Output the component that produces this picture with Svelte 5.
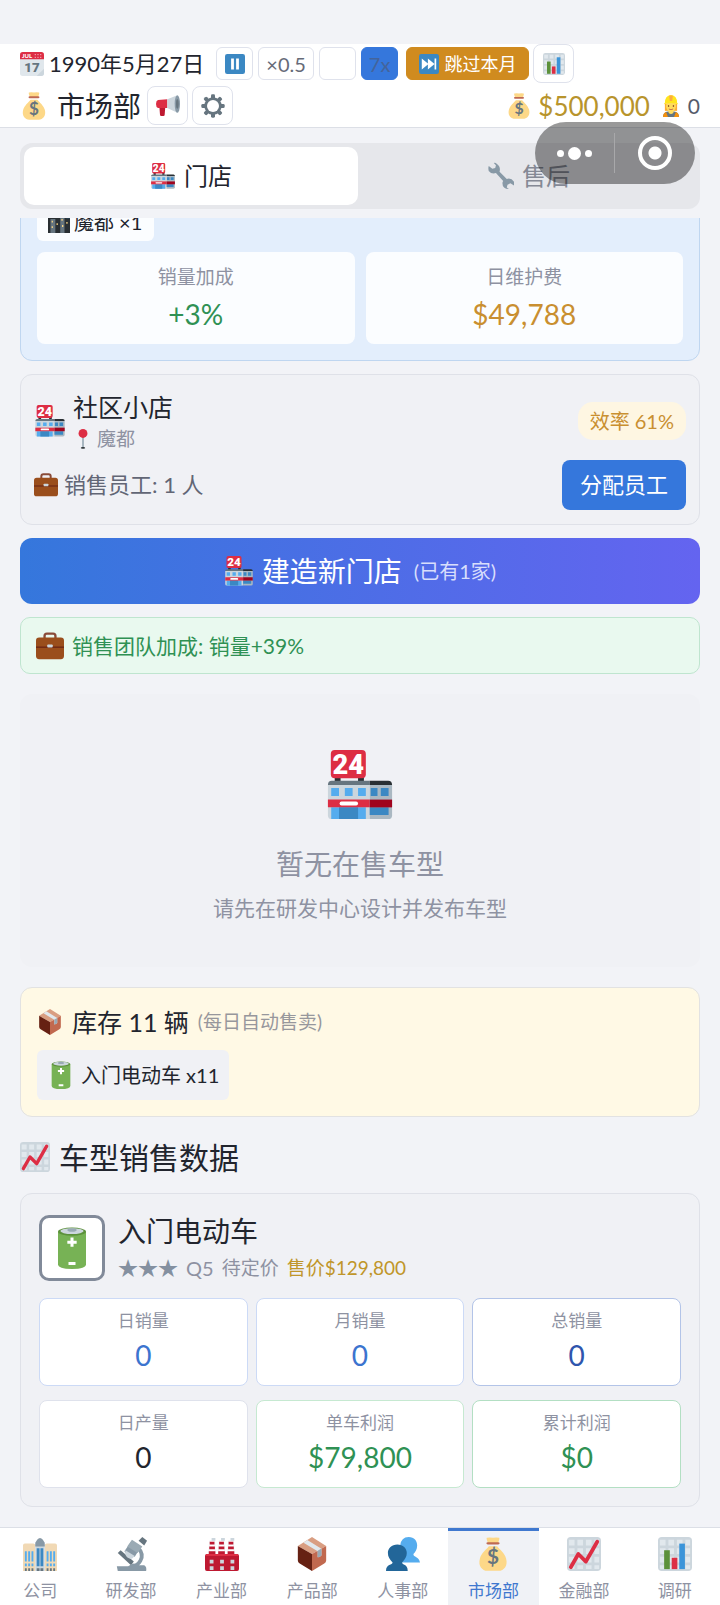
<script>
	let tab = $state("store");
	let page = $state("market");
	let speed = $state("7x");

	const bonuses = [
		{ label: "销量加成", value: "+3%", tone: "green" },
		{ label: "日维护费", value: "$49,788", tone: "amber" }
	];

	const stats = [
		{ label: "日销量", value: "0", tone: "blue" },
		{ label: "月销量", value: "0", tone: "blue" },
		{ label: "总销量", value: "0", tone: "navy" },
		{ label: "日产量", value: "0", tone: "dark" },
		{ label: "单车利润", value: "$79,800", tone: "green" },
		{ label: "累计利润", value: "$0", tone: "deepgreen" }
	];

	const pages = [
		{ id: "company", icon: "office", label: "公司" },
		{ id: "research", icon: "microscope", label: "研发部" },
		{ id: "industry", icon: "factory", label: "产业部" },
		{ id: "product", icon: "box", label: "产品部" },
		{ id: "people", icon: "people", label: "人事部" },
		{ id: "market", icon: "bag", label: "市场部" },
		{ id: "finance", icon: "trend", label: "金融部" },
		{ id: "survey", icon: "bars", label: "调研" }
	];
</script>

{#snippet icon(name, size)}
	<svg class="icon {size}" viewBox="0 0 36 36" aria-hidden="true">
		{#if name === "shop"}
			<path fill="#292f33" d="M5 13h3v4H5zM17 13h3v4h-3z" />
			<rect x="3" width="18" height="14.5" rx="2" fill="#dd2e44" />
			<text class="sign" x="12" y="12.2" font-size="14" font-weight="900" text-anchor="middle" fill="#fff">24</text>
			<path fill="#ccd6dd" d="M1.5 18H23v17.5H3.500a2 2 0 0 1-2-2z" />
			<path fill="#aab8c2" d="M23 18h11.500v15.500a2 2 0 0 1-2 2H23z" />
			<path fill="#66757f" d="M1.500 18q0-2.200 2-2.200H23V18z" />
			<path fill="#292f33" d="M23 15.800h9.500q2 0 2 2.200H23z" />
			<path fill="#55acee" d="M3.200 19.600h4v4h-4zM10.200 19.600h4v4h-4zM17 19.600h4v4h-4zM3.200 29.400H21v6.100H3.200z" />
			<path fill="#3b88c3" d="M23.500 19.600H27v4h-3.500zM28.700 19.600h4v4h-4zM7.200 29.400H17v6.100H7.200zM23 29.400h9.700v4H23z" />
			<path fill="#dd2e44" d="M1.500 25.500H23v4H1.500z" />
			<path fill="#a0041e" d="M23 25.500h11.500v4H23z" />
			<rect x="7.500" y="26.500" width="9.500" height="2" rx="1" fill="#fff" />
		{:else if name === "bag"}
			<path fill="#fdd888" d="M31.900 22.900c-1.500-5.600-7-9.800-9.500-13H13.600c-2.500 3.200-8 7.400-9.500 13C2 30.600 6.500 35.500 12 35.800h12c5.500-.3 10-5.200 7.900-12.900z" />
			<path fill="#fdd888" d="M13 7Q10.500 1.500 11.500.8q3-.8 6.500 0 3.500-.8 6.500 0 1 .7-1.500 6.200z" />
			<path fill="#bf6952" d="M12.500 5.500h11q1.500 0 1.500 1.200t-1.500 1.200h-11Q11 7.900 11 6.700t1.500-1.200z" />
			<text x="18" y="29" font-size="22" font-weight="700" text-anchor="middle" fill="#67757f">$</text>
		{:else if name === "calendar"}
			<path fill="#e0e7ec" d="M0 8h36v24a4 4 0 0 1-4 4H4a4 4 0 0 1-4-4z" />
			<path fill="#ccd6dd" d="M25 36h7a4 4 0 0 0 4-4v-7z" />
			<path fill="#dd2e44" d="M4 0h28a4 4 0 0 1 4 4v7H0V4a4 4 0 0 1 4-4z" />
			<text x="10.500" y="9.500" font-size="9" font-weight="900" text-anchor="middle" fill="#fff">JUL</text>
			<path stroke="#f4abba" stroke-width="1.500" stroke-dasharray="2 2" d="M22 4h11M22 8h11" />
			<text class="sign" x="18" y="30" font-size="20" font-weight="900" text-anchor="middle" fill="#66757f">17</text>
		{:else if name === "pause" || name === "skip"}
			<rect width="36" height="36" rx="4" fill="#3b88c3" />
			{#if name === "pause"}
				<path fill="#fff" d="M11 8h5v20h-5zM20 8h5v20h-5z" />
			{:else}
				<path fill="#fff" d="M5 8l12 10L5 28zM16 8l12 10-12 10zM28 8h3v20h-3z" />
			{/if}
		{:else if name === "bars" || name === "trend"}
			<rect width="36" height="36" rx="4" fill="#ccd6dd" />
			<path fill="#e1e8ed" d="M2 3h6v6H2zM11 3h6v6h-6zM20 3h6v6h-6zM29 3h5v6h-5zM2 12h6v6H2zM11 12h6v6h-6zM20 12h6v6h-6zM29 12h5v6h-5zM2 21h6v6H2zM11 21h6v6h-6zM20 21h6v6h-6zM29 21h5v6h-5zM2 30h6v4H2zM11 30h6v4h-6zM20 30h6v4h-6zM29 30h5v4h-5z" />
			{#if name === "bars"}
				<path fill="#5c913b" d="M6.500 14h6v20h-6z" />
				<path fill="#dd2e44" d="M14.500 22h6v12h-6z" />
				<path fill="#3b94d9" d="M22.500 7h6v27h-6z" />
			{:else}
				<path fill="none" stroke="#dd2e44" stroke-width="4" stroke-linecap="round" stroke-linejoin="round" d="M4 32l8-14 8 8L32 5" />
			{/if}
		{:else if name === "megaphone"}
			<path fill="#be1931" d="M5 18h9l-1 13q0 2-2 2H8q-2 0-2-2z" />
			<path fill="#dd2e44" d="M3 9l14-1v13H3q-3-1-3-6t3-6z" />
			<path fill="#ccd6dd" d="M17 8l15-6v26l-15-7z" />
			<ellipse cx="32" cy="15" rx="4" ry="13" fill="#8899a6" />
			<ellipse cx="32" cy="15" rx="2" ry="7" fill="#66757f" />
		{:else if name === "gear"}
			<g fill="#66757f">
				{#each [0, 45, 90, 135] as turn}
					<rect x="15" y="0.500" width="6" height="35" rx="2" transform="rotate({turn} 18 18)" />
				{/each}
				<circle cx="18" cy="18" r="13" />
			</g>
			<circle cx="18" cy="18" r="9" fill="#fff" />
		{:else if name === "worker"}
			<path fill="#ffac33" d="M8 14h20v12H8z" />
			<path fill="#66757f" d="M5 36q0-8 8-9h10q8 1 8 9z" />
			<path fill="#f4900c" d="M5 36q0-6 5-8l3 8zM31 36q0-6-5-8l-3 8z" />
			<path fill="#ffdc5d" d="M14 24h8v5q-4 4-8 0z" />
			<ellipse cx="18" cy="18" rx="8" ry="10" fill="#ffdc5d" />
			<path fill="#ffe51e" d="M8 13Q8 1 18 0q10 1 10 13 2 1 1 2-11-4-22 0-1-1 1-2z" />
			<path fill="#fcab40" d="M15 1h6l-1 9h-4z" />
			<circle cx="14" cy="18" r="1.200" fill="#662113" />
			<circle cx="22" cy="18" r="1.200" fill="#662113" />
			<path fill="none" stroke="#c1694f" stroke-width="1.500" d="M14.500 23q3.500 2 7 0" />
		{:else if name === "wrench"}
			<path fill="#8899a6" d="M12 1q6 4 4 11l10 10q6-2 10 4v5l-5-3-4 2-1 4 3 2q-9 0-9-8 0-2 1-3L11 14q-6 2-10-3-1-4 0-7l5 4 4-1 1-4-3-3q2-1 4 1z" />
		{:else if name === "city"}
			<rect width="36" height="36" fill="#226699" />
			<path fill="#88c9f9" d="M0 0h36v7H0z" />
			<path fill="#292f33" d="M0 10h9V5h9v5h4V3h8v9h6v24H0z" />
			<path fill="#66757f" d="M4 13h8v23H4zM20 9h7v27h-7z" />
			<path fill="#ffd983" d="M6 16h2v3H6zM22 13h2v3h-2zM14 20h2v3h-2zM30 18h2v3h-2zM6 25h2v3H6zM23 23h2v3h-2z" />
		{:else if name === "pin"}
			<path fill="#99aab5" d="M16.500 14h3v19h-3z" />
			<ellipse cx="18" cy="34" rx="4" ry="1.500" fill="#292f33" />
			<circle cx="18" cy="8" r="8" fill="#dd2e44" />
		{:else if name === "briefcase"}
			<path fill="none" stroke="#8a4b38" stroke-width="3" d="M11 9V5q0-3 3-3h8q3 0 3 3v4" />
			<rect y="7" width="36" height="28" rx="4" fill="#9a4e1c" />
			<path stroke="#662113" stroke-width="1.500" d="M0 19.500h36" />
			<rect x="14.500" y="16" width="7" height="4" rx="1" fill="#ccd6dd" />
		{:else if name === "box"}
			<path fill="#d99e82" d="M18 0l15 9.500L18 18 3 9.500z" />
			<path fill="#662113" d="M3 9.500L18 18v18L5 28q-2-1-2-3z" />
			<path fill="#c1694f" d="M33 9.500L18 18v18l13-8q2-1 2-3z" />
			<path fill="#e1e8ed" d="M9 6l4-2.800 15 9.300v7q-2 2-4 2V15z" />
			<path fill="#99aab5" d="M24 14.500l4-2.200v7.200q-2 2-4 2z" />
		{:else if name === "battery"}
			<path fill="#77b255" d="M6 4v28q0 4 12 4t12-4V4z" />
			<ellipse cx="18" cy="4" rx="12" ry="3.500" fill="#5c913b" />
			<ellipse cx="18" cy="3.500" rx="10" ry="2.500" fill="#ccd6dd" />
			<ellipse cx="18" cy="2.500" rx="4" ry="1.500" fill="#99aab5" />
			<path fill="#fff" d="M16.700 9h2.600v2.700H22v2.600h-2.700V17h-2.600v-2.700H14v-2.600h2.700zM15 30h6v2.500h-6z" />
		{:else if name === "office"}
			<path fill="#f1d9b5" d="M0 9q0-2 2-2h9l2 1v28H0zM23 8l2-1h9q2 0 2 2v27H23z" />
			<path fill="#ccd6dd" d="M13 8h10v28H13z" />
			<path fill="#8899a6" d="M13 10V6l2-3q3-4 6 0l2 3v4z" />
			<path fill="#55acee" d="M2 15h2v11H2zM5.500 15h2v11h-2zM9 15h2v11H9zM25 15h2v11h-2zM28.500 15h2v11h-2zM32 15h2v11h-2z" />
			<path fill="#3b88c3" d="M14.500 12h3v19h-3zM18.500 12h3v19h-3z" />
			<path fill="#55acee" d="M2 28h2v3H2zM5.500 28h2v3h-2zM9 28h2v3H9zM25 28h2v3h-2zM28.500 28h2v3h-2zM32 28h2v3h-2z" />
			<path fill="#66757f" d="M2 33h2v3H2zM5.500 33h2v3h-2zM9 33h2v3H9zM14.500 33h3v3h-3zM18.500 33h3v3h-3zM25 33h2v3h-2zM28.500 33h2v3h-2zM32 33h2v3h-2z" />
		{:else if name === "microscope"}
			<path fill="#66757f" d="M4 17l3-3 14 12-3 4z" />
			<path fill="none" stroke="#8899a6" stroke-width="4" d="M25 11q7 7 3 14-3 6-10 6" />
			<path fill="#8899a6" d="M3 31h12l5-3 7 2h5q3 2 2 6H4zM18 5l10 6-6 10-7-1-4-5z" />
			<path fill="#ccd6dd" d="M12 14l10 6-3 3q-6 0-7-5z" />
			<path fill="#9aaab4" d="M19 3l11 7-5 7-11-7z" />
			<path fill="#66757f" d="M26 4l4-4 5 4-3 5z" />
		{:else if name === "factory"}
			<path fill="#fff" stroke="#dfe4ea" stroke-width=".5" d="M5 4h5l1 15H4zM15 4h5l1 15h-7zM25 4h5l1 15h-7z" />
			<path fill="#be1931" d="M5 5h5v3H5zM4.500 10h6v3h-6zM4 15h7v3H4zM15 5h5v3h-5zM14.500 10h6v3h-6zM14 15h7v3h-7zM25 5h5v3h-5zM24.500 10h6v3h-6zM24 15h7v3h-7z" />
			<path fill="#ccd6dd" d="M7 1h4v3H7zM17 1h4v3h-4zM27 1h4v3h-4z" />
			<rect y="18" width="36" height="18" rx="2" fill="#be1931" />
			<path fill="#dd2e44" d="M1 18h34v2H1z" />
			<path fill="#ccd6dd" d="M5 24h4v4H5zM16 24h4v4h-4zM27 24h4v4h-4zM5 31h4v4H5zM16 31h4v4h-4zM27 31h4v4h-4z" />
		{:else if name === "people"}
			<path fill="#55acee" d="M24 0c6 0 9 4 9 9 0 4-2 7-4 9 0 4 6 2 7 9H15V9q1-9 9-9z" />
			<path fill="#226699" d="M12 8c6 0 10 4 10 9 0 4-2 7-5 10 0 3 6 1 6 9H0c0-8 7-6 7-9-3-3-5-6-5-10 0-5 4-9 10-9z" />
		{/if}
	</svg>
{/snippet}

<div class="app">
	<header>
		<div class="row">
			<span class="date">{@render icon("calendar", "s24")}1990年5月27日</span>
			<div class="speeds">
				<button class="speed" aria-label="pause">{@render icon("pause", "s20")}</button>
				<button class="speed" onclick={() => (speed = "0.5")}>×0.5</button>
				<button class="speed" aria-label="normal speed"></button>
				<button class="speed" class:on={speed === "7x"} onclick={() => (speed = "7x")}>7x</button>
			</div>
			<button class="skip">{@render icon("skip", "s20")}跳过本月</button>
			<button class="tool" aria-label="report">{@render icon("bars", "s22")}</button>
		</div>
		<div class="row">
			<h1>{@render icon("bag", "s28")}市场部</h1>
			<button class="tool" aria-label="ads">{@render icon("megaphone", "s24")}</button>
			<button class="tool" aria-label="settings">{@render icon("gear", "s24")}</button>
			<div class="wallet">
				{@render icon("bag", "s26")}<span class="cash">$500,000</span>
				{@render icon("worker", "s22")}<span>0</span>
			</div>
		</div>
		<div class="capsule">
			<button class="dots" aria-label="more"><i></i><i class="big"></i><i></i></button>
			<button class="close" aria-label="close"><i></i></button>
		</div>
	</header>

	<div class="tabs">
		<button class:active={tab === "store"} onclick={() => (tab = "store")}>{@render icon("shop", "s26")}门店</button>
		<button class:active={tab === "service"} onclick={() => (tab = "service")}>{@render icon("wrench", "s26")}售后</button>
	</div>

	<main>
		<section class="summary">
			<span class="city">{@render icon("city", "s22")}魔都 ×1</span>
			<div class="bonuses">
				{#each bonuses as bonus}
					<div class="bonus">
						<span>{bonus.label}</span>
						<strong class={bonus.tone}>{bonus.value}</strong>
					</div>
				{/each}
			</div>
		</section>

		<section class="store">
			<div class="line">
				{@render icon("shop", "s32")}
				<div class="name">
					<h2>社区小店</h2>
					<p>{@render icon("pin", "s20")}魔都</p>
				</div>
				<span class="badge">效率 61%</span>
			</div>
			<div class="line staff">
				<span>{@render icon("briefcase", "s24")}销售员工: 1 人</span>
				<button class="assign">分配员工</button>
			</div>
		</section>

		<button class="build">{@render icon("shop", "s30")}建造新门店<small>(已有1家)</small></button>

		<section class="team">{@render icon("briefcase", "s28")}销售团队加成: 销量+39%</section>

		<section class="empty">
			{@render icon("shop", "s70")}
			<h2>暂无在售车型</h2>
			<p>请先在研发中心设计并发布车型</p>
		</section>

		<section class="stock">
			<h2>{@render icon("box", "s26")}库存 11 辆<small>(每日自动售卖)</small></h2>
			<span class="item">{@render icon("battery", "s28")}入门电动车 x11</span>
		</section>

		<h2 class="heading">{@render icon("trend", "s30")}车型销售数据</h2>

		<section class="model">
			<div class="top">
				<div class="thumb">{@render icon("battery", "s42")}</div>
				<div>
					<h3>入门电动车</h3>
					<p class="meta">
						<span class="stars">★★★</span>
						<span class="quality">Q5</span>
						<span>待定价</span>
						<span class="price">售价$129,800</span>
					</p>
				</div>
			</div>
			<div class="stats">
				{#each stats as stat}
					<div class="stat {stat.tone}">
						<span>{stat.label}</span>
						<strong>{stat.value}</strong>
					</div>
				{/each}
			</div>
		</section>
	</main>

	<nav>
		{#each pages as item}
			<button class:current={page === item.id} onclick={() => (page = item.id)}>
				{@render icon(item.icon, "s34")}{item.label}
			</button>
		{/each}
	</nav>
</div>

<style>
	:global(body) {
		background: #f2f3f7;
	}

	.app {
		display: flex;
		flex-direction: column;
		min-height: 100vh;
		box-sizing: border-box;
		padding-top: 44px;
		overflow: hidden;
		color: #22252e;
		font-family: Lato, "Noto Sans CJK SC", sans-serif;
		font-size: 21px;
		line-height: 28px;
	}

	.app * {
		box-sizing: border-box;
	}

	h1, h2, h3, p {
		margin: 0;
		font-weight: 400;
	}

	strong {
		font-weight: 400;
	}

	button {
		display: flex;
		align-items: center;
		justify-content: center;
		padding: 0;
		border: 0;
		background: none;
		color: inherit;
		font: inherit;
		cursor: pointer;
	}

	.icon {
		flex: none;
		display: block;
		overflow: visible;
	}

	.sign {
		font-family: Roboto, sans-serif;
	}

	.s20 { width: 20px; height: 20px; }
	.s22 { width: 22px; height: 22px; }
	.s24 { width: 24px; height: 24px; }
	.s26 { width: 26px; height: 26px; }
	.s28 { width: 28px; height: 28px; }
	.s30 { width: 30px; height: 30px; }
	.s32 { width: 32px; height: 32px; }
	.s34 { width: 34px; height: 34px; }
	.s42 { width: 42px; height: 42px; }
	.s70 { width: 70px; height: 70px; }

	/* header */
	header {
		position: relative;
		display: flex;
		flex-direction: column;
		gap: 3px;
		padding: 0 20px 2px;
		border-bottom: 1px solid #dcdfe6;
		background: #fff;
	}

	.row {
		display: flex;
		align-items: center;
		gap: 4px;
		height: 39px;
	}

	.date {
		display: flex;
		align-items: center;
		gap: 5px;
		margin-right: 8px;
		font-size: 22px;
		white-space: nowrap;
	}

	.speeds {
		display: flex;
		gap: 5px;
		margin-right: 4px;
	}

	.speed, .skip {
		height: 33px;
		border: 1px solid #dfe2ec;
		border-radius: 6px;
		color: #666b78;
		font-size: 20px;
	}

	.speed {
		min-width: 37px;
		padding: 0 7px;
	}

	.speed.on {
		border-color: #3577dc;
		background: #3577dc;
		color: #44649b;
	}

	.skip {
		gap: 5px;
		padding: 0 12px;
		border-color: #d08b1f;
		background: #d08b1f;
		color: #fff;
		font-size: 18px;
		white-space: nowrap;
	}

	.tool {
		width: 41px;
		height: 39px;
		border: 1px solid #dfe2ec;
		border-radius: 8px;
	}

	h1 {
		display: flex;
		align-items: center;
		gap: 9px;
		margin-right: 2px;
		font-size: 28px;
		line-height: 38px;
	}

	.wallet {
		display: flex;
		align-items: center;
		gap: 6px;
		margin-left: auto;
		color: #565b6b;
	}

	.cash {
		margin-right: 4px;
		color: #b8942c;
		font-size: 26px;
	}

	.capsule {
		position: absolute;
		z-index: 2;
		top: 78px;
		right: 25px;
		display: grid;
		grid-template-columns: 1fr 1fr;
		align-items: center;
		width: 160px;
		height: 62px;
		border-radius: 31px;
		background: rgba(0, 0, 0, 0.4);
	}

	.capsule button {
		height: 40px;
	}

	.dots {
		gap: 4px;
		border-right: 1px solid #a8a8aa;
	}

	.dots i {
		width: 7px;
		height: 7px;
		border-radius: 50%;
		background: #fff;
	}

	.dots .big {
		width: 13px;
		height: 13px;
	}

	.close i {
		width: 34px;
		height: 34px;
		border: 4px solid #fff;
		border-radius: 50%;
		background: radial-gradient(#fff 6px, transparent 7px);
	}

	/* tabs */
	.tabs {
		display: grid;
		grid-template-columns: 1fr 1fr;
		gap: 4px;
		margin: 15px 20px 9px;
		padding: 4px;
		border-radius: 12px;
		background: #e6e7eb;
	}

	.tabs button {
		gap: 8px;
		height: 58px;
		border-radius: 10px;
		color: #858995;
		font-size: 24px;
	}

	.tabs .active {
		background: #fff;
		color: #22252e;
	}

	/* content */
	main {
		flex: 1;
		display: flex;
		flex-direction: column;
		padding: 0 20px 20px;
		overflow: hidden;
	}

	section {
		border: 1px solid #dfe1e8;
		border-radius: 12px;
		background: #f0f1f5;
	}

	/* list is scrolled a little, the top of this card is under the tabs */
	.summary {
		margin-top: -32px;
		padding: 16px;
		border-color: #bfd6f0;
		background: #e3eefc;
	}

	.city {
		display: inline-flex;
		align-items: center;
		gap: 4px;
		height: 38px;
		padding: 0 12px 0 11px;
		border-radius: 6px;
		background: #fbfdff;
		font-size: 20px;
		vertical-align: top;
	}

	.bonuses {
		display: grid;
		grid-template-columns: 1fr 1fr;
		gap: 11px;
		margin-top: 11px;
	}

	.bonus {
		display: flex;
		flex-direction: column;
		gap: 6px;
		padding: 12px;
		border-radius: 8px;
		background: #fbfdff;
		text-align: center;
	}

	.bonus span {
		color: #8e92a2;
		font-size: 19px;
		line-height: 26px;
	}

	.bonus strong {
		font-size: 28px;
		line-height: 36px;
	}

	.bonus .green {
		color: #2f9154;
	}

	.bonus .amber {
		color: #c98f30;
	}

	.store {
		display: flex;
		flex-direction: column;
		gap: 7px;
		margin-top: 13px;
		padding: 14px 13px;
	}

	.line {
		display: flex;
		align-items: center;
		gap: 7px;
	}

	.name {
		flex: 1;
	}

	.name h2 {
		font-size: 25px;
		line-height: 36px;
	}

	.name p {
		display: flex;
		align-items: center;
		gap: 4px;
		color: #8e92a2;
		font-size: 19px;
		line-height: 28px;
	}

	.badge {
		padding: 0 12px;
		border-radius: 15px;
		background: #fef6e2;
		color: #c98f30;
		font-size: 20px;
		line-height: 38px;
	}

	.staff {
		justify-content: space-between;
		color: #626675;
		font-size: 22px;
	}

	.staff span {
		display: flex;
		align-items: center;
		gap: 6px;
	}

	.assign {
		height: 50px;
		padding: 0 18px;
		border-radius: 8px;
		background: #3577dc;
		color: #fff;
	}

	.build {
		gap: 8px;
		height: 66px;
		margin-top: 13px;
		border-radius: 12px;
		background: linear-gradient(90deg, #3577dc, #6464f0);
		color: #fff;
		font-size: 28px;
	}

	.build small {
		margin-left: 4px;
		color: #d8defc;
		font-size: 20px;
	}

	.team {
		display: flex;
		align-items: center;
		gap: 8px;
		height: 57px;
		margin-top: 13px;
		padding: 0 15px;
		border-color: #bfe5cf;
		border-radius: 10px;
		background: #e9f9ef;
		color: #2f9154;
	}

	.empty {
		display: flex;
		flex-direction: column;
		align-items: center;
		margin-top: 20px;
		padding: 56px 20px 43px;
		border: 0;
		color: #8e92a2;
	}

	.empty h2 {
		margin-top: 24px;
		font-size: 28px;
		line-height: 40px;
	}

	.empty p {
		margin-top: 8px;
		line-height: 32px;
	}

	.stock {
		margin-top: 20px;
		padding: 16px;
		border-color: #e2e2e2;
		background: #fff9e5;
	}

	.stock h2, .heading {
		display: flex;
		align-items: center;
		gap: 9px;
		font-size: 25px;
		line-height: 36px;
	}

	.stock small {
		color: #97979c;
		font-size: 19px;
	}

	.item {
		display: inline-flex;
		align-items: center;
		gap: 6px;
		height: 50px;
		margin-top: 10px;
		padding: 0 10px;
		border-radius: 6px;
		background: #f0f1f5;
		font-size: 20px;
		vertical-align: top;
	}

	.heading {
		margin: 18px 0 14px;
		font-size: 30px;
		line-height: 44px;
	}

	.model {
		padding: 18px;
	}

	.top {
		display: flex;
		align-items: center;
		gap: 13px;
		height: 72px;
		margin-bottom: 14px;
	}

	.thumb {
		display: flex;
		align-items: center;
		justify-content: center;
		width: 66px;
		height: 66px;
		border: 3px solid #818a99;
		border-radius: 10px;
		background: #fff;
	}

	h3 {
		font-size: 28px;
		line-height: 40px;
	}

	.meta {
		display: flex;
		align-items: center;
		gap: 8px;
		color: #8e92a2;
		font-size: 19px;
		line-height: 34px;
	}

	.stars {
		color: #8490a0;
		font-size: 20px;
	}

	.quality {
		font-size: 20px;
	}

	.price {
		color: #c0962a;
	}

	.stats {
		display: grid;
		grid-template-columns: repeat(3, 1fr);
		gap: 14px 8px;
	}

	.stat {
		display: flex;
		flex-direction: column;
		gap: 4px;
		height: 88px;
		padding-top: 10px;
		border: 1px solid #dfe2ec;
		border-radius: 8px;
		background: #fff;
		text-align: center;
	}

	.stat span {
		color: #8e92a2;
		font-size: 17px;
		line-height: 24px;
	}

	.stat strong {
		font-size: 28px;
		line-height: 36px;
	}

	.stat.blue { border-color: #ccdaf6; }
	.stat.navy { border-color: #b3c4e8; }
	.stat.green { border-color: #c6e9d1; }
	.stat.deepgreen { border-color: #b3dfc3; }

	.blue strong { color: #3c74cf; }
	.navy strong { color: #2f55ad; }
	.green strong, .deepgreen strong { color: #2f9154; }

	/* bottom bar, slightly wider than the screen and aligned to its right edge */
	nav {
		display: grid;
		grid-template-columns: repeat(8, 1fr);
		margin-left: -5px;
		border-top: 1px solid #dcdfe6;
		background: #fff;
	}

	nav button {
		flex-direction: column;
		gap: 8px;
		height: 78px;
		padding-top: 2px;
		border-top: 3px solid transparent;
		color: #8e92a2;
		font-size: 17px;
		line-height: 24px;
	}

	nav .current {
		border-color: #3f78cf;
		background: #f0f2f6;
		color: #3f78cf;
	}
</style>
